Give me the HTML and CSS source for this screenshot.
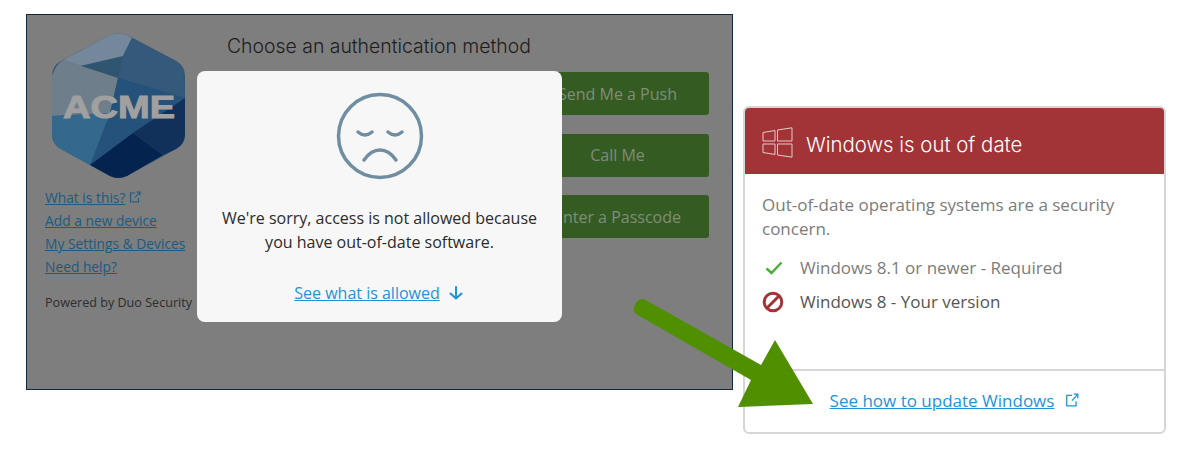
FILE: index.html
```html
<!DOCTYPE html>
<html lang="en">
<head>
    <meta charset="UTF-8">
    <meta name="viewport" content="width=device-width, initial-scale=1.0">
    <title>Out of date software</title>
    <link rel="stylesheet" href="styles.css">
</head>
<body>
    <div class="page">
        <div class="frame">
            <div class="sidebar">
                <svg class="logo" viewBox="0 0 133 146" width="133" height="146">
                    <path d="M58 2 Q66 -1 75 2 L124 28 Q133 33 133 43 L133 101 Q133 111 124 116 L75 143 Q66 147 58 143 L9 116 Q0 111 0 101 L0 43 Q0 33 9 28 Z" fill="#2f5570"/>
                    <path d="M58 2 Q66 -1 75 2 L80 5 L71 23 L28 33 L11 27 Z" fill="#75879a"/>
                    <path d="M80 5 L124 28 Q129 31 131 36 L133 65 L66 45 L71 23 Z" fill="#34597a"/>
                    <path d="M2 38 Q4 32 11 27 L66 45 L58 80 L0 83 L0 43 Z" fill="#6f7e8b"/>
                    <path d="M66 45 L133 65 L81 100 L38 132 L58 80 Z" fill="#25527a"/>
                    <path d="M0 83 L58 80 L38 132 L9 116 Q0 111 0 101 Z" fill="#34688c"/>
                    <path d="M38 132 L81 100 L111 122 L75 143 Q66 147 58 143 Z" fill="#04244f"/>
                    <path d="M81 100 L133 65 L133 101 Q133 111 124 116 L111 122 Z" fill="#11305a"/>
                    <text class="logo-text" x="67" y="85" text-anchor="middle" textLength="112" lengthAdjust="spacingAndGlyphs">ACME</text>
                </svg>
                <ul class="links">
                    <li><a href="#">What is this?</a>
                        <svg class="ext" viewBox="0 0 12 12" width="12" height="12"><path d="M6 2H1.5V11H9.5V7M6 6.5L11 1M7.5 1H11V4.5"/></svg>
                    </li>
                    <li><a href="#">Add a new device</a></li>
                    <li><a href="#">My Settings &amp; Devices</a></li>
                    <li><a href="#">Need help?</a></li>
                </ul>
                <p class="powered">Powered by Duo Security</p>
            </div>
            <div class="main">
                <h1>Choose an authentication method</h1>
                <div class="buttons">
                    <button class="method-btn">Send Me a Push</button>
                    <button class="method-btn">Call Me</button>
                    <button class="method-btn">Enter a Passcode</button>
                </div>
            </div>
            <div class="modal">
                <svg class="sad" viewBox="0 0 88 88" width="88" height="88">
                    <circle cx="44" cy="44" r="41.5"/>
                    <path d="M22 40Q29 46 36 40M52 40Q59 46 66 40M28 68Q35 58 44 58Q53 58 60 68"/>
                </svg>
                <p class="sorry">We're sorry, access is not allowed because you have out-of-date software.</p>
                <div class="see-row">
                    <a href="#">See what is allowed</a>
                    <svg class="down" viewBox="0 0 14 14" width="14" height="14"><path d="M7 1V12.5M1.5 7.5L7 12.5L12.5 7.5"/></svg>
                </div>
            </div>
        </div>
        <div class="card">
            <div class="card-head">
                <svg class="win" viewBox="0 0 31 31" width="31" height="31">
                    <path d="M1 5.5L13 3.5V14H1ZM15.5 3L30 .8V14H15.5ZM1 17H13V27.5L1 25.5ZM15.5 17H30V30.2L15.5 28Z"/>
                </svg>
                <h2>Windows is out of date</h2>
            </div>
            <div class="card-body">
                <p class="concern">Out-of-date operating systems are a security concern.</p>
                <div class="req">
                    <svg class="check" viewBox="0 0 18 14" width="18" height="14"><path d="M1.5 7.5L6.5 12L16.5 1.5"/></svg>
                    <span>Windows 8.1 or newer - Required</span>
                </div>
                <div class="req current">
                    <svg class="no" viewBox="0 0 22 22" width="22" height="22"><circle cx="11" cy="11" r="8.8"/><path d="M5 17L17 5"/></svg>
                    <span>Windows 8 - Your version</span>
                </div>
            </div>
            <div class="card-foot">
                <a href="#">See how to update Windows</a>
                <svg class="ext blue" viewBox="0 0 12 12" width="14" height="14"><path d="M6 2H1.5V11H9.5V7M6 6.5L11 1M7.5 1H11V4.5"/></svg>
            </div>
        </div>
        <svg class="arrow" viewBox="0 0 190 120" width="190" height="120">
            <path d="M10 1L127 67L141 42L179 106L104 109L117 82L2 16Q-2 12 1 7Q4 0 10 1Z"/>
        </svg>
    </div>
</body>
</html>
```

FILE: styles.css
```css
* {
    box-sizing: border-box;
}
body {
    margin: 0;
    background: #fff;
    font-family: "Open Sans", sans-serif;
}
a {
    color: #1f93d6;
}
p,
h1,
h2,
ul {
    margin: 0;
    padding: 0;
}
.page {
    position: relative;
    display: flex;
    align-items: flex-start;
    gap: 10px;
    width: 1189px;
    height: 450px;
    padding: 14px 0 0 26px;
}
.frame {
    position: relative;
    display: flex;
    width: 707px;
    height: 376px;
    padding: 18px 23px 0 18px;
    background: #7e7e7e;
    border: 1px solid #13283c;
}
.sidebar {
    width: 170px;
}
.logo {
    display: block;
    margin: 0 0 0 7px;
}
.logo-text {
    font-family: "Liberation Sans", sans-serif;
    font-weight: 700;
    font-size: 32px;
    fill: #a0a0a0;
    stroke: #a0a0a0;
    stroke-width: 1;
}
.links {
    margin-top: 7px;
    list-style: none;
    font-size: 13.8px;
    line-height: 23px;
}
.links a {
    color: #1d5a80;
}
.ext {
    fill: none;
    stroke: #1d5a80;
    stroke-width: 1.1;
    vertical-align: 0;
}
.ext.blue {
    stroke: #1f93d6;
}
.powered {
    margin-top: 16px;
    font-size: 12.6px;
    white-space: nowrap;
    color: #2d2d2d;
}
.main {
    flex: 1;
    display: flex;
    flex-direction: column;
    align-items: flex-end;
}
.main h1 {
    align-self: flex-start;
    margin: 1px 0 0 12px;
    font-family: Inter, sans-serif;
    font-size: 19.4px;
    font-weight: 300;
    line-height: 24px;
    color: #1d1d1d;
}
.buttons {
    display: flex;
    flex-direction: column;
    gap: 18.5px;
    margin-top: 14px;
}
.method-btn {
    width: 183px;
    height: 43px;
    border: none;
    border-radius: 3px;
    background: #345c22;
    color: #808c7a;
    font-family: "Open Sans", sans-serif;
    font-size: 16px;
}
.modal {
    position: absolute;
    top: 56px;
    left: 170px;
    display: flex;
    flex-direction: column;
    align-items: center;
    width: 365px;
    height: 251px;
    padding-top: 21px;
    background: #f7f7f7;
    border-radius: 8px;
}
.sad {
    fill: none;
    stroke: #6f8ea1;
    stroke-width: 3.5;
    stroke-linecap: round;
}
.sorry {
    width: 330px;
    margin-top: 26px;
    text-align: center;
    font-size: 16px;
    line-height: 24px;
    color: #2b2b2b;
}
.see-row {
    display: flex;
    align-items: center;
    gap: 9px;
    margin-top: 27px;
    padding-right: 2px;
    font-size: 16px;
    line-height: 24px;
}
.down {
    fill: none;
    stroke: #1f93d6;
    stroke-width: 2;
    stroke-linecap: round;
    stroke-linejoin: round;
}
.card {
    display: flex;
    flex-direction: column;
    width: 423px;
    height: 328px;
    margin-top: 92px;
    background: #fff;
    border: 2px solid #d6d6d6;
    border-radius: 6px;
    overflow: hidden;
}
.card-head {
    display: flex;
    align-items: center;
    gap: 13px;
    height: 66px;
    padding: 3px 0 0 17px;
    background: #a23437;
    color: #fff;
}
.win {
    fill: none;
    stroke: #e9c9ca;
    stroke-width: 1;
}
.card-head h2 {
    margin-top: 3px;
    font-family: Inter, sans-serif;
    font-size: 20.4px;
    font-weight: 300;
}
.card-body {
    flex: 1;
    padding: 19px 17px 0;
    border-bottom: 2px solid #d6d6d6;
}
.concern {
    margin-bottom: 15px;
    font-size: 17px;
    line-height: 24px;
    color: #7b7b7b;
}
.req {
    display: flex;
    align-items: center;
    margin-top: 10px;
    font-size: 17px;
    line-height: 24px;
    color: #7b7b7b;
}
.concern + .req {
    margin-top: 0;
}
.req svg {
    margin-right: 16px;
}
.req .check {
    margin-left: 3px;
    margin-right: 17px;
    fill: none;
    stroke: #4cae3c;
    stroke-width: 2.5;
}
.current {
    color: #555;
}
.no {
    fill: none;
    stroke: #a23437;
    stroke-width: 3;
}
.card-foot {
    display: flex;
    align-items: center;
    justify-content: center;
    gap: 11px;
    height: 61px;
    padding-bottom: 3px;
    font-size: 17px;
}
.arrow {
    position: absolute;
    top: 298px;
    left: 634px;
    overflow: visible;
    fill: #4f8f00;
}
```
